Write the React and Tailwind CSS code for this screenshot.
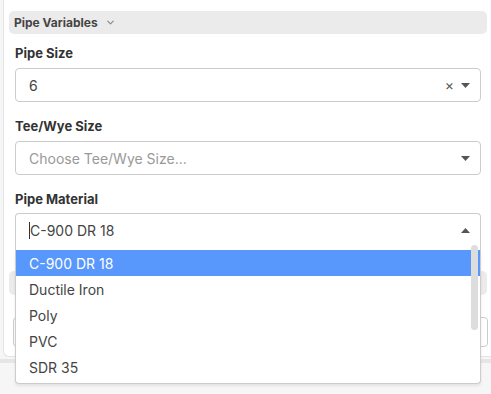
import { ChevronDown } from "lucide-react";

const materials = ["C-900 DR 18", "Ductile Iron", "Poly", "PVC", "SDR 35"];

function Caret({ up }) {
  return (
    <svg width="9" height="5" viewBox="0 0 9 5" className="shrink-0">
      {up ? (
        <path d="M0 5 L4.5 0 L9 5 Z" fill="#555" />
      ) : (
        <path d="M0 0 L9 0 L4.5 5 Z" fill="#555" />
      )}
    </svg>
  );
}

function Label({ children, className }) {
  return (
    <div className={"h-[18px] flex items-center text-[13px] font-bold text-[#333] " + className}>
      {children}
    </div>
  );
}

function App() {
  return (
    <div
      className="w-[491px] h-[394px] overflow-hidden bg-[#f6f6f6] pl-[3px]"
      style={{ fontFamily: "Inter, 'Noto Sans', sans-serif" }}
    >
      {/* Card */}
      <div className="w-[495px] h-[357px] bg-white border-l border-b border-[#e3e3e3] rounded-bl-[6px] pt-[11px] pl-[5px]">

        {/* Section header */}
        <div className="w-[478px] h-[23px] rounded-[5px] bg-[#ebebeb] flex items-center pl-[5px] gap-[7px]">
          <span className="text-[12px] font-bold text-[#444]">Pipe Variables</span>
          <ChevronDown className="w-[11px] h-[11px] text-[#888]" strokeWidth={2.5} />
        </div>

        <div className="ml-[6px] w-[466px]">

          <Label className="mt-[11px] mb-[5px]">Pipe Size</Label>
          <div className="h-[34px] border border-[#cccccc] rounded-[4px] flex items-center pl-[13px] pr-[10px] text-[14px] text-[#444]">
            <span className="flex-1">6</span>
            <span className="text-[14px] text-[#555] mr-[7px] leading-none">×</span>
            <Caret />
          </div>

          <Label className="mt-[16px] mb-[5px]">Tee/Wye Size</Label>
          <div className="h-[34px] border border-[#cccccc] rounded-[4px] flex items-center pl-[13px] pr-[10px] text-[14px] text-[#999]">
            <span className="flex-1">Choose Tee/Wye Size...</span>
            <Caret />
          </div>

          <Label className="mt-[16px] mb-[4px]">Pipe Material</Label>
          <div className="relative">
            <div className="h-[37px] border border-b-0 border-[#cccccc] rounded-t-[4px] flex items-center pl-[13px] pr-[10px] pb-[3px] text-[14px] text-[#444]">
              <span className="w-px h-[17px] bg-[#333]" />
              <span className="flex-1">C-900 DR 18</span>
              <Caret up />
            </div>

            {/* Dropdown */}
            <div className="absolute left-0 top-full w-[466px] h-[134px] bg-white border border-t-0 border-[#cccccc] rounded-b-[4px] shadow-[0_2px_3px_rgba(0,0,0,0.08)] z-10">
              <div className="h-[133px] overflow-hidden">
                {materials.map((m, i) => (
                  <div
                    key={m}
                    className={
                      "h-[26px] flex items-center pl-[13px] text-[14px] " +
                      (i === 0 ? "bg-[#5897fb] text-white" : "text-[#444]")
                    }
                  >
                    {m}
                  </div>
                ))}
              </div>
              <div className="absolute right-[2px] top-[-5px] w-[7px] h-[85px] rounded-full bg-[#dddddd]" />
            </div>
          </div>
        </div>

        {/* Content behind the open menu */}
        <div className="mt-[21px] w-[478px] h-[24px] rounded-[5px] bg-[#ebebeb]" />
        <div className="mt-[22px] ml-[4px] w-[475px] h-[30px] border border-[#cccccc] rounded-[4px]" />
      </div>

      <div className="-ml-[3px] mt-[2px] w-[491px] h-[4px] bg-[#e5e5e5]" />
    </div>
  );
}

export default App;
